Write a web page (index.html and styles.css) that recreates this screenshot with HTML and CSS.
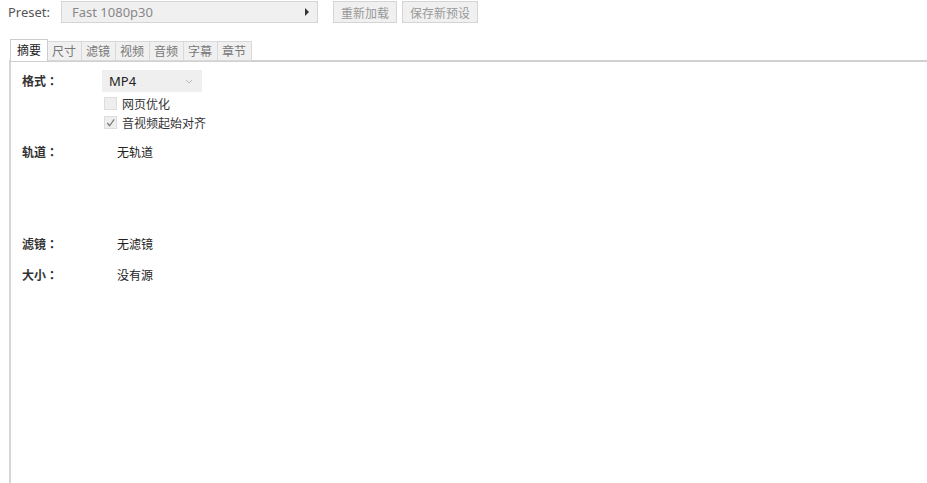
FILE: index.html
```html
<!DOCTYPE html>
<html>
<head>
    <title>Summary</title>
    <link rel="stylesheet" href="styles.css">
</head>
<body>
    <div class="toolbar">
        <span class="preset-label">Preset:</span>
        <div class="preset-box">
            <span>Fast 1080p30</span>
            <span class="arrow"></span>
        </div>
        <button class="btn">重新加载</button>
        <button class="btn">保存新预设</button>
    </div>

    <div class="tabs">
        <div class="tab active">摘要</div>
        <div class="tab">尺寸</div>
        <div class="tab">滤镜</div>
        <div class="tab">视频</div>
        <div class="tab">音频</div>
        <div class="tab">字幕</div>
        <div class="tab">章节</div>
    </div>

    <div class="panel">
        <div class="row row-format">
            <div class="label">格式：</div>
            <div class="value">
                <div class="select">
                    <span>MP4</span>
                    <svg width="8" height="5" viewBox="0 0 8 5"><path d="M1 1 L4 4 L7 1" fill="none" stroke="#bbb" stroke-width="1"/></svg>
                </div>
                <label class="check first"><span class="box"></span>网页优化</label>
                <label class="check"><span class="box">
                    <svg width="12" height="12" viewBox="0 0 12 12"><path d="M2.5 6 L5 9 L10 2" fill="none" stroke="#777" stroke-width="1.3"/></svg>
                </span>音视频起始对齐</label>
            </div>
        </div>
        <div class="row row-tracks">
            <div class="label">轨道：</div>
            <div class="value text">无轨道</div>
        </div>
        <div class="row row-filters">
            <div class="label">滤镜：</div>
            <div class="value text">无滤镜</div>
        </div>
        <div class="row row-size">
            <div class="label">大小：</div>
            <div class="value text">没有源</div>
        </div>
    </div>
</body>
</html>
```

FILE: styles.css
```css
body {
    margin: 0;
    font-family: "Noto Sans", "Noto Sans CJK SC", sans-serif;
    font-size: 12px;
    color: #222;
    background: #fff;
    overflow: hidden;
}
.toolbar {
    display: flex;
    align-items: center;
    height: 22px;
    padding: 1px 0 0 8px;
}
.preset-label {
    width: 53px;
    font-size: 13px;
    color: #555;
}
.preset-box {
    box-sizing: border-box;
    width: 257px;
    height: 22px;
    display: flex;
    align-items: center;
    justify-content: space-between;
    padding: 0 8px 0 10px;
    background: #f0f0f0;
    border: 1px solid #d4d4d4;
    font-size: 13px;
    color: #888;
}
.arrow {
    width: 0;
    height: 0;
    border-top: 4px solid transparent;
    border-bottom: 4px solid transparent;
    border-left: 4px solid #333;
}
.btn {
    box-sizing: border-box;
    height: 22px;
    margin-left: 15px;
    padding: 0 7px;
    background: #f0f0f0;
    border: 1px solid #d4d4d4;
    font-family: "Noto Sans CJK SC", sans-serif;
    font-size: 12px;
    color: #999;
}
.btn + .btn {
    margin-left: 5px;
}
.tabs {
    display: flex;
    margin: 17px 0 0 10px;
    height: 20px;
    position: relative;
    z-index: 1;
}
.tab {
    box-sizing: border-box;
    height: 20px;
    margin-top: 1px;
    padding: 0 5px 0 4px;
    line-height: 18px;
    background: #f0f0f0;
    border: 1px solid #d9d9d9;
    border-left: none;
    color: #777;
    font-family: "Noto Sans CJK SC", sans-serif;
}
.tab.active {
    height: 22px;
    margin-top: -1px;
    padding: 0 6px;
    line-height: 20px;
    background: #fff;
    border: 1px solid #ccc;
    border-bottom: none;
    color: #222;
}
.panel {
    margin-left: 9px;
    height: 430px;
    border-top: 2px solid #d0d0d0;
    border-left: 2px solid #d6d6d6;
    padding-top: 8px;
    font-family: "Noto Sans CJK SC", sans-serif;
}
.row {
    display: flex;
}
.label {
    width: 80px;
    padding-left: 11px;
    font-family: "Noto Sans CJK JP", sans-serif;
    font-weight: bold;
    color: #333;
}
.value {
    display: flex;
    flex-direction: column;
}
.text {
    padding-left: 15px;
}
.row-format .label {
    line-height: 22px;
}
.select {
    box-sizing: border-box;
    width: 100px;
    height: 22px;
    display: flex;
    align-items: center;
    justify-content: space-between;
    padding: 0 9px 0 7px;
    background: #efefef;
    font-family: "Noto Sans", sans-serif;
    font-size: 13px;
    color: #222;
}
.check {
    display: flex;
    align-items: center;
    height: 19px;
    line-height: 19px;
    margin-left: 2px;
    color: #333;
}
.check.first {
    margin-top: 2px;
}
.box {
    box-sizing: border-box;
    width: 13px;
    height: 13px;
    margin-right: 5px;
    background: #eee;
    border: 1px solid #ddd;
    display: flex;
    align-items: center;
    justify-content: center;
}
.row-tracks {
    margin-top: 11px;
    height: 92px;
}
.row-filters {
    height: 31px;
}
```
